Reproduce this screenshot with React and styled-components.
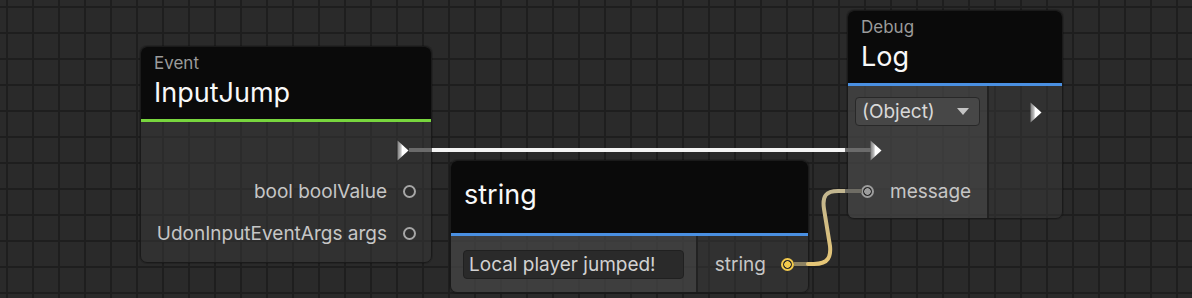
import React from "react";
import styled, { createGlobalStyle } from "styled-components";

const Global = createGlobalStyle`
  html, body { margin: 0; padding: 0; background: #2a2a2a; overflow: hidden; }
  body { font-family: Inter, "Noto Sans", sans-serif; }
`;

const Canvas = styled.div`
  position: relative;
  width: 1192px;
  height: 298px;
  overflow: hidden;
  background-color: #2a2a2a;
  background-image:
    linear-gradient(to right, #1e1e1e 2px, transparent 2px),
    linear-gradient(to bottom, #1e1e1e 2px, transparent 2px);
  background-size: 26px 26px;
  background-position: 6px 6px;
`;

const Node = styled.div`
  position: absolute;
  left: ${(p) => p.$x}px;
  top: ${(p) => p.$y}px;
  width: ${(p) => p.$w}px;
  height: ${(p) => p.$h}px;
  box-sizing: border-box;
  border: 1px solid #1a1a1a;
  border-radius: 7px;
  overflow: hidden;
  display: flex;
  flex-direction: column;
  background: rgba(56, 56, 56, 0.5);
  box-shadow: 0 0 0 1px rgba(0, 0, 0, 0.15);
`;

const Header = styled.div`
  height: 75px;
  flex: none;
  background: #0a0a0a;
  box-sizing: border-box;
  padding: ${(p) => (p.$single ? "0 13px 4px" : "6px 13px 0")};
  display: flex;
  flex-direction: column;
  justify-content: ${(p) => (p.$single ? "center" : "flex-start")};
  border-bottom: 3px solid ${(p) => p.$accent};
`;

const Subtitle = styled.div`
  font-size: 17px;
  line-height: 20px;
  color: #9b9b9b;
`;

const Title = styled.div`
  font-size: 27px;
  line-height: 32px;
  color: #f8f8f8;
  margin-top: ${(p) => (p.$single ? 0 : 4)}px;
`;

const Body = styled.div`
  flex: 1;
  display: flex;
  min-height: 0;
`;

const Section = styled.div`
  display: flex;
  flex-direction: column;
  box-sizing: border-box;
  width: ${(p) => (p.$w ? `${p.$w}px` : "auto")};
  flex: ${(p) => (p.$w ? "none" : 1)};
  background: ${(p) => (p.$input ? "rgba(72, 72, 72, 0.55)" : "transparent")};
  border-right: ${(p) => (p.$input ? "2px solid #222222" : "none")};
  padding: ${(p) => p.$pad || "0"};
  justify-content: ${(p) => p.$justify || "flex-start"};
`;

const Row = styled.div`
  display: flex;
  align-items: center;
  justify-content: ${(p) => (p.$end ? "flex-end" : "flex-start")};
  height: ${(p) => p.$h}px;
  margin-top: ${(p) => p.$mt || 0}px;
  padding: ${(p) => p.$pad || "0"};
  gap: ${(p) => p.$gap || 0}px;
  flex: none;
`;

const Label = styled.span`
  font-size: 19px;
  color: #c6c6c6;
  white-space: nowrap;
`;

const Port = styled.span`
  width: 13px;
  height: 13px;
  box-sizing: border-box;
  border-radius: 50%;
  border: 2px solid ${(p) => p.$color};
  background: ${(p) =>
    p.$filled
      ? `radial-gradient(circle, ${p.$color} 0 3px, #2b2b2b 3.5px)`
      : "#2e2e2e"};
  flex: none;
`;

const TextField = styled.div`
  height: 29px;
  box-sizing: border-box;
  border: 1px solid #202020;
  border-radius: 4px;
  background: #2a2a2a;
  display: flex;
  align-items: center;
  padding: 0 5px;
  font-size: 19px;
  color: #d2d2d2;
  white-space: nowrap;
`;

const Dropdown = styled.div`
  height: 29px;
  box-sizing: border-box;
  border: 1px solid #282828;
  border-radius: 4px;
  background: #474747;
  display: flex;
  align-items: center;
  justify-content: space-between;
  padding: 0 10px 0 6px;
  font-size: 19px;
  color: #d8d8d8;
  flex: none;
`;

const Caret = styled.span`
  width: 0;
  height: 0;
  border-left: 6px solid transparent;
  border-right: 6px solid transparent;
  border-top: 7px solid #c4c4c4;
`;

const Wires = styled.svg`
  position: absolute;
  left: 0;
  top: 0;
  pointer-events: none;
`;

function ExecArrow() {
  return (
    <svg width="12" height="21" viewBox="0 0 12 21">
      <defs>
        <linearGradient id="execg" x1="0" x2="1" y1="0" y2="0">
          <stop offset="0" stopColor="#7c7c7c" />
          <stop offset="0.3" stopColor="#bdbdbd" />
          <stop offset="0.45" stopColor="#ffffff" />
          <stop offset="1" stopColor="#ffffff" />
        </linearGradient>
      </defs>
      <polygon points="0.5,0.5 11.5,10.5 0.5,20.5" fill="url(#execg)" />
    </svg>
  );
}

export default function App() {
  return (
    <Canvas>
      <Global />

      <Node $x={140} $y={46} $w={292} $h={217}>
        <Header $accent="#78d63e">
          <Subtitle>Event</Subtitle>
          <Title>InputJump</Title>
        </Header>
        <Body>
          <Section $pad="14px 0 0">
            <Row $h={28} $end $pad="0 22px 0 0">
              <ExecArrow />
            </Row>
            <Row $h={42} $mt={6} $end $gap={16} $pad="0 15px 0 0">
              <Label>bool boolValue</Label>
              <Port $color="#a6a6a6" />
            </Row>
            <Row $h={42} $end $gap={16} $pad="0 15px 0 0">
              <Label>UdonInputEventArgs args</Label>
              <Port $color="#a6a6a6" />
            </Row>
          </Section>
        </Body>
      </Node>

      <Node $x={450} $y={160} $w={359} $h={133}>
        <Header $accent="#4a90e2" $single>
          <Title $single>string</Title>
        </Header>
        <Body>
          <Section $input $w={247} $pad="0 12px" $justify="center">
            <TextField>Local player jumped!</TextField>
          </Section>
          <Section $justify="center">
            <Row $h={42} $end $gap={15} $pad="0 14px 0 0">
              <Label>string</Label>
              <Port $color="#f2c94c" $filled />
            </Row>
          </Section>
        </Body>
      </Node>

      <Node $x={847} $y={10} $w={216} $h={209}>
        <Header $accent="#4a90e2">
          <Subtitle>Debug</Subtitle>
          <Title>Log</Title>
        </Header>
        <Body>
          <Section $input $w={141} $pad="11px 7px 0">
            <Dropdown>
              (Object)
              <Caret />
            </Dropdown>
            <Row $h={28} $mt={10} $pad="0 0 0 15px">
              <ExecArrow />
            </Row>
            <Row $h={42} $mt={6} $gap={16} $pad="0 0 0 6px">
              <Port $color="#9c9c9c" $filled />
              <Label>message</Label>
            </Row>
          </Section>
          <Section $pad="16px 0 0">
            <Row $h={20} $end $pad="0 20px 0 0">
              <ExecArrow />
            </Row>
          </Section>
        </Body>
      </Node>

      <Wires width="1192" height="298" viewBox="0 0 1192 298">
        <defs>
          <linearGradient id="strwire" x1="0" y1="1" x2="0" y2="0">
            <stop offset="0" stopColor="#e6c676" />
            <stop offset="1" stopColor="#c2b690" />
          </linearGradient>
        </defs>
        <line x1="409" y1="150" x2="433" y2="150" stroke="#6b6b6b" strokeWidth="4" />
        <line x1="432" y1="150" x2="846" y2="150" stroke="#f4f4f4" strokeWidth="4" />
        <line x1="845" y1="150" x2="871" y2="150" stroke="#6b6b6b" strokeWidth="4" />
        <line x1="794" y1="264" x2="809" y2="264" stroke="#8d8262" strokeWidth="4" />
        <path
          d="M808 264 L814 264 C829 264 831 256 830 246 L824 209 C822 196 826 191 838 191 L846 191"
          fill="none"
          stroke="url(#strwire)"
          strokeWidth="4"
          strokeLinecap="round"
        />
        <line x1="845" y1="191" x2="862" y2="191" stroke="#6e6c64" strokeWidth="4" />
      </Wires>
    </Canvas>
  );
}
